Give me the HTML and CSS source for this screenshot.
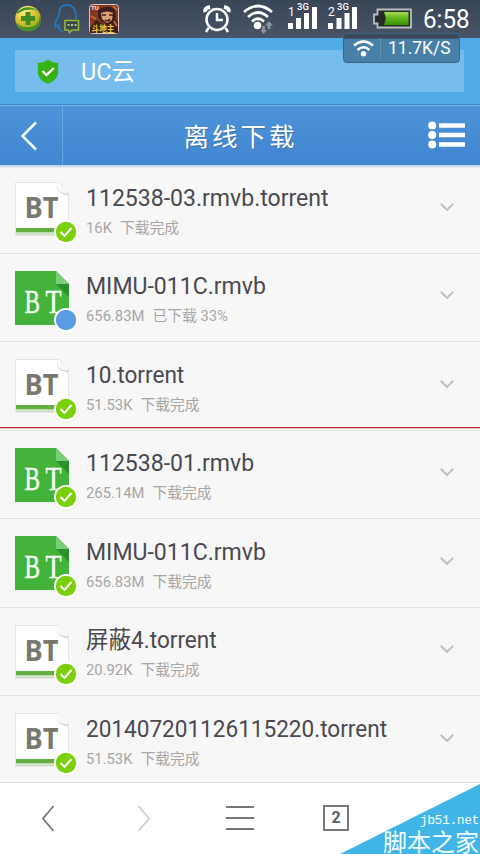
FILE: index.html
```html
<!DOCTYPE html>
<html lang="zh-CN">
<head>
<meta charset="utf-8">
<title>离线下载</title>
<link rel="stylesheet" href="styles.css">
</head>
<body>
<svg class="defs" width="0" height="0" aria-hidden="true">
  <defs>
    <linearGradient id="battery" x1="0" y1="0" x2="0" y2="1"><stop offset="0" stop-color="#a9dd55"/><stop offset=".45" stop-color="#62b81c"/><stop offset="1" stop-color="#3c9108"/></linearGradient>
    <radialGradient id="gold" cx=".35" cy=".2" r=".9"><stop offset="0" stop-color="#fff28a"/><stop offset=".5" stop-color="#d8c22d"/><stop offset="1" stop-color="#7d9d1d"/></radialGradient>
    <symbol id="torrent" viewBox="0 0 54 54">
      <path d="M.5.5H44L53.500 10V53.500H.5z" fill="#fff" stroke="#e4e4e4"/>
      <path d="M43 .5V8Q45 11 53.500 11V14Q43 12 42 7z" fill="#dedede"/>
      <path d="M44 1V9Q47 11 53 10z" fill="#f8f8f8"/>
      <path d="M1 46H53V50.500H1z" fill="#62ae3e"/><path d="M1 50.500H53V53H1z" fill="#cfe2c8"/>
      <text x="9.500" y="36.200" class="bt-sans" textLength="34" lengthAdjust="spacingAndGlyphs">BT</text>
    </symbol>
    <symbol id="video" viewBox="0 0 54 54">
      <path d="M0 0H41L54 13V54H0z" fill="#43b33b"/>
      <path d="M41 13H54V26z" fill="#2c8f2e"/><path d="M41 0L54 13H41z" fill="#79ce7a"/>
      <text x="9.500" y="42" class="bt-serif" textLength="15.500" lengthAdjust="spacingAndGlyphs">B</text>
      <text x="30.500" y="42" class="bt-serif" textLength="16" lengthAdjust="spacingAndGlyphs">T</text>
    </symbol>
    <symbol id="done" viewBox="0 0 24 24"><circle cx="12" cy="12" r="12" fill="#fff"/><circle cx="12" cy="12" r="10.200" fill="#7bd00c"/><path d="M6.500 12L10.500 15.800L17.500 8" fill="none" stroke="#fff" stroke-width="2"/></symbol>
    <symbol id="active" viewBox="0 0 24 24"><circle cx="12" cy="12" r="12" fill="#fff"/><circle cx="12" cy="12" r="10.200" fill="#599ce2"/></symbol>
    <symbol id="down" viewBox="0 0 14 8"><path d="M.8.8L7 7L13.200.8" fill="none" stroke="#bfbfbf" stroke-width="2"/></symbol>
  </defs>
</svg>
<div class="phone">
  <header class="status">
    <svg class="status-icons" width="480" height="38" viewBox="0 0 480 38">
      <circle cx="28" cy="18.500" r="12.800" fill="url(#gold)"/>
      <path d="M16 22Q22 30 34 26Q39 24 40 16Q43 25 35 30Q21 34 16 22M17 12Q27 3 38 11Q28 7 17 14" fill="#438f29"/>
      <path d="M25.500 12h5v4h4.500v5h-4.500v4h-5v-4H21v-5h4.500z" fill="#438c22"/>
      <path d="M63 32C59 31 59 28 58 25Q54 30 55.500 22L59 15Q59 5 67 5T76 15V19" fill="none" stroke="#2377ba" stroke-width="1.800"/>
      <path d="M65 20.500H78.500V30H72l-2.500 2.500L68.500 30H65z" fill="#394747" stroke="#91b935" stroke-width="1.600"/>
      <path d="M67.500 25h2m1.500 0h2m1.500 0h2" stroke="#dbe8c8" stroke-width="1.500"/>
      <rect x="89.500" y="4.500" width="29" height="29" rx="3" fill="#873620" stroke="#e1c7c2"/>
      <path d="M90 28L96 20L103 24L114 17L118 23V33H90z" fill="#421f18"/>
      <path d="M98 10Q106 4 115 9L116 17L111 23L102 22L98 17z" fill="#3c201d"/>
      <path d="M101 13Q107 10 113 13L112 20L107 23L102 19z" fill="#dea078"/>
      <path d="M102 15h4m3 0h4M105 20q3 2 5-1" stroke="#421811" stroke-width="1.500" fill="none"/>
      <path d="M113 6l4 4m-21 9l-5-3m23 5l3 5" stroke="#c86b35" stroke-width="2"/>
      <text x="91" y="10" class="game-mark">TU</text><text x="91.500" y="32" class="game-name" textLength="23" lengthAdjust="spacingAndGlyphs">斗地主</text>
      <g fill="none" stroke="#fff" stroke-width="2.500"><circle cx="217" cy="19.500" r="10.500"/><path d="M217 13V20H223M208.500 28L206 32M225.500 28L228 32"/><path d="M205.500 12Q204 8 210 7M228.500 12Q230 8 224 7" stroke-width="4"/></g>
      <g fill="none" stroke="#fff" stroke-width="2.700"><path d="M244 12Q258 0 272 12M248 17Q258 8 268 17M252 21.500Q258 16 264 21.500"/></g><circle cx="257.500" cy="25.500" r="3.800" fill="#fff"/>
      <path d="M263.500 34L260.500 30H262.200V26H265V30H267zM269 21L273 25.500H270.500V29H267.500V25.500H265z" fill="#8b939e"/>
      <g fill="#fff"><path d="M288 23h5v6h-5zM296 18h5v11h-5zM304 13h5v16h-5zM312 7h5v22h-5zM328 23h5v6h-5zM336.500 18h5v11h-5zM344.500 13h5v16h-5zM352 7h5v22h-5z"/>
        <text class="sim" x="288" y="16">1</text><text class="sim" x="328" y="16">2</text><text class="network" x="297" y="9.500" textLength="12">3G</text><text class="network" x="337" y="9.500" textLength="12">3G</text></g>
      <path d="M377.500 9.500H411V27.500H377.500V23.500H374V14.500H377.500z" fill="#252d2b" stroke="#b9bdc2" stroke-width="1.800"/>
      <path d="M384 12H408.500V25H384L386 18z" fill="url(#battery)"/>
    </svg>
    <time class="clock">6:58</time>
  </header>
  <section class="address-area">
    <div class="address">
      <svg width="22" height="25" viewBox="0 0 22 25"><path d="M11 .5C8 3 4 4 .8 4V13C1 19 6 23 11 24.800C16 23 21 19 21.200 13V4C18 4 14 3 11 .5z" fill="#36b314"/><path d="M5.500 12L9.500 16L16.800 9" fill="none" stroke="#fff" stroke-width="2.400"/></svg>
      <span class="address-name">UC云</span>
    </div>
  </section>
  <nav class="titlebar">
    <button class="back" aria-label="返回"><svg width="18" height="30" viewBox="0 0 18 30"><path d="M16 1.500L2.500 15L16 28.500" fill="none" stroke="#f1ffff" stroke-width="2.500"/></svg></button>
    <h1>离线下载</h1>
    <button class="list-button" aria-label="列表"><svg width="37" height="28" viewBox="0 0 37 28" fill="#fff"><circle cx="4.200" cy="4.500" r="4"/><circle cx="4.200" cy="14" r="4"/><circle cx="4.200" cy="23.500" r="4"/><path d="M11 2.300h26v4.400H11zM11 11.800h26v4.400H11zM11 21.300h26v4.400H11z"/></svg></button>
  </nav>
  <main class="files">
    <article class="file"><div class="thumb"><svg class="file-icon"><use href="#torrent"/></svg><svg class="badge"><use href="#done"/></svg></div><div class="details"><h2 class="wide">112538-03.rmvb.torrent</h2><p><span>16K</span><span>下载完成</span></p></div><svg class="expand"><use href="#down"/></svg></article>
    <article class="file"><div class="thumb"><svg class="file-icon"><use href="#video"/></svg><svg class="badge"><use href="#active"/></svg></div><div class="details"><h2 class="wide">MIMU-011C.rmvb</h2><p><span>656.83M</span><span>已下载 33%</span></p></div><svg class="expand"><use href="#down"/></svg></article>
    <article class="file"><div class="thumb"><svg class="file-icon"><use href="#torrent"/></svg><svg class="badge"><use href="#done"/></svg></div><div class="details"><h2>10.torrent</h2><p><span>51.53K</span><span>下载完成</span></p></div><svg class="expand"><use href="#down"/></svg></article>
    <article class="file"><div class="thumb"><svg class="file-icon"><use href="#video"/></svg><svg class="badge"><use href="#done"/></svg></div><div class="details"><h2 class="wide">112538-01.rmvb</h2><p><span>265.14M</span><span>下载完成</span></p></div><svg class="expand"><use href="#down"/></svg></article>
    <article class="file"><div class="thumb"><svg class="file-icon"><use href="#video"/></svg><svg class="badge"><use href="#done"/></svg></div><div class="details"><h2 class="wide">MIMU-011C.rmvb</h2><p><span>656.83M</span><span>下载完成</span></p></div><svg class="expand"><use href="#down"/></svg></article>
    <article class="file"><div class="thumb"><svg class="file-icon"><use href="#torrent"/></svg><svg class="badge"><use href="#done"/></svg></div><div class="details"><h2>屏蔽4.torrent</h2><p><span>20.92K</span><span>下载完成</span></p></div><svg class="expand"><use href="#down"/></svg></article>
    <article class="file"><div class="thumb"><svg class="file-icon"><use href="#torrent"/></svg><svg class="badge"><use href="#done"/></svg></div><div class="details"><h2>201407201126115220.torrent</h2><p><span>51.53K</span><span>下载完成</span></p></div><svg class="expand"><use href="#down"/></svg></article>
  </main>
  <footer class="toolbar">
    <button aria-label="后退"><svg width="14" height="27" viewBox="0 0 14 27"><path d="M12.500 1L2 13.500L12.500 26" fill="none" stroke="#777" stroke-width="1.800"/></svg></button>
    <button aria-label="前进"><svg width="14" height="27" viewBox="0 0 14 27"><path d="M1.500 1L12 13.500L1.500 26" fill="none" stroke="#cfcfcf" stroke-width="1.800"/></svg></button>
    <button aria-label="菜单"><svg width="28" height="24" viewBox="0 0 28 24"><path d="M0 1h28M0 12h28M0 23h28" stroke="#777" stroke-width="2"/></svg></button>
    <button aria-label="窗口"><span class="windows">2</span></button>
    <span></span>
  </footer>
  <div class="speed"><svg width="21" height="17" viewBox="0 0 21 17" fill="none" stroke="#fff" stroke-width="2.400"><path d="M1 5.500Q10.500-2.500 20 5.500M4.500 10Q10.500 4.500 16.500 10"/><circle cx="10.500" cy="13.800" r="1.500" fill="#fff"/></svg><span>11.7K/S</span></div>
  <div class="accent-line"></div>
  <div class="watermark"><svg width="140" height="70" viewBox="0 0 140 70"><path d="M0 70L140 0V70z" fill="#41b5e8"/></svg><div class="watermark-copy"><span class="domain">jb51.net</span><span class="site">脚本之家</span></div></div>
</div>
</body>
</html>
```

FILE: styles.css
```css
* { box-sizing: border-box; }
body { margin: 0; font-family: Roboto, "Noto Sans CJK SC", sans-serif; }
button { border: 0; padding: 0; background: none; }
svg { display: block; flex-shrink: 0; }
.defs { position: absolute; }
.phone { position: relative; display: flex; flex-direction: column; width: 480px; height: 854px; overflow: hidden; background: #f7f7f7; }
.status { position: relative; height: 38px; flex-shrink: 0; background: linear-gradient(#394656, #485467); }
.clock { position: absolute; left: 423px; top: 4px; color: #fff; font-size: 25.5px; line-height: 30px; transform: scaleX(.95); transform-origin: left; }
.sim { font: 12px Roboto, sans-serif; }
.network { font: 500 9.5px Roboto, sans-serif; }
.game-mark { font: bold 6px Roboto, sans-serif; fill: #eee; }
.game-name { font: bold 9px "Noto Sans CJK SC", sans-serif; fill: #f6c83b; }
.address-area { height: 67px; padding: 12px 16px 0 15px; flex-shrink: 0; background: #51abe7; border-bottom: 1px solid #388ac9; }
.address { height: 42px; padding: 0 22px; display: flex; align-items: center; background: #76bcec; color: #fff; }
.address-name { margin: 2px 0 0 22px; font-size: 23.5px; line-height: 30px; }
.titlebar { display: flex; height: 60px; flex-shrink: 0; position: relative; align-items: center; justify-content: space-between; background: linear-gradient(#4d94d9, #4086d1); border-top: 1px solid #75b6eb; border-bottom: 1px solid #4389c7; box-shadow: 0 2px 2px #8db9df99; z-index: 1; }
.back { width: 63px; height: 59px; display: flex; align-items: center; padding: 2px 0 0 20px; border-right: 1px solid #67a7e2; }
.titlebar h1 { margin: 0 10px 0 0; font: 400 25.5px/36px "Noto Sans CJK SC", sans-serif; letter-spacing: 3px; color: #fff; text-shadow: 1px 1px #4475a6; }
.list-button { width: 52px; }
.files { height: 617px; flex-shrink: 0; overflow: hidden; }
.file { height: 88.5px; display: flex; border-bottom: 1.5px solid #e3e3e4; }
.thumb { position: relative; margin: 17px 17px 0 15px; width: 54px; height: 54px; flex-shrink: 0; }
.file-icon { width: 54px; height: 54px; }
.badge { position: absolute; left: 39px; top: 37.5px; width: 24px; height: 24px; }
.bt-sans { font: bold 28px "Open Sans", sans-serif; fill: #77796f; }
.bt-serif { font: 34px "Liberation Serif", serif; fill: #f7fff4; stroke: #f7fff4; stroke-width: .5px; }
.details { flex: 1; padding-top: 17.5px; }
.file h2 { margin: 0; font-weight: 400; font-size: 24px; line-height: 30px; color: #4a494f; white-space: nowrap; transform: scaleX(.94); transform-origin: left; }
.file h2.wide { transform: scaleX(.96); }
.file p { margin: 5px 0 0; display: flex; gap: 8px; font-size: 14.8px; line-height: 20px; color: #a6a6a6; }
.expand { width: 14px; height: 8px; margin: 37.5px 26px 0 0; }
.toolbar { height: 72px; display: grid; grid-template-columns: repeat(5, 96px); background: #fff; border-top: 1px solid #dedede; }
.toolbar button { display: flex; align-items: center; justify-content: center; padding-bottom: 1px; }
.windows { width: 26px; height: 26px; border: 2px solid #777; color: #606060; font: 700 16px/22px Roboto, sans-serif; }
.speed { position: absolute; left: 343px; top: 33px; width: 117px; height: 30px; padding-left: 9px; display: flex; align-items: center; border: 1px solid #3a6386; border-radius: 4px; background: linear-gradient(#394959 0 15%, #477fa7 18%); color: #fff; font-size: 17.5px; }
.speed span { border-left: 1px solid #6790ad; margin-left: 6px; padding-left: 7px; }
.accent-line { position: absolute; top: 427px; left: 0; width: 100%; height: 1px; background: #c0222a; z-index: 2; box-shadow: 0 1px #ecc8cc; }
.watermark { position: absolute; right: 0; bottom: 0; width: 140px; height: 70px; color: #f3fdff; }
.watermark-copy { position: absolute; inset: 28px 1px 0 40px; display: flex; flex-direction: column; align-items: flex-end; }
.domain { font: 13px/16px "Liberation Mono", monospace; letter-spacing: -.4px; margin-top: 1px; }
.site { font: 24px/24px "Noto Sans CJK SC", sans-serif; white-space: nowrap; }
```
